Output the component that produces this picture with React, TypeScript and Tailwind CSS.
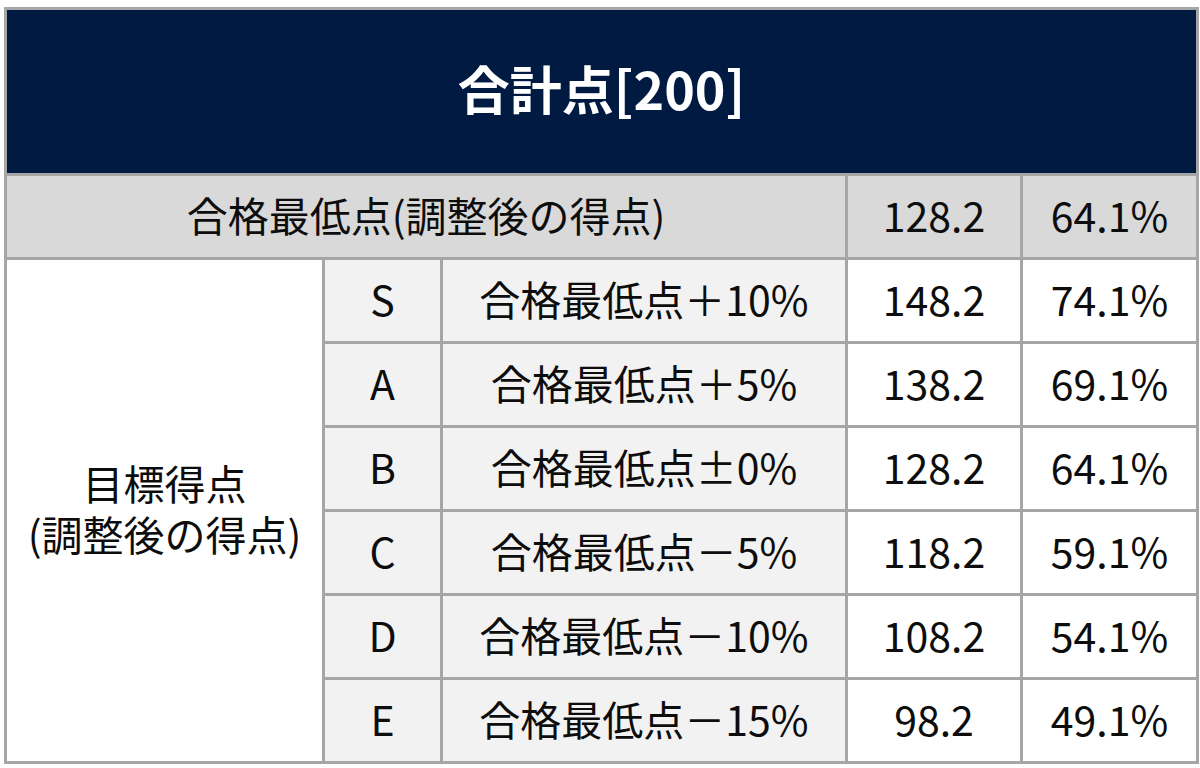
const rows = [
  { grade: 'S', label: '合格最低点＋10%', score: '148.2', rate: '74.1%' },
  { grade: 'A', label: '合格最低点＋5%', score: '138.2', rate: '69.1%' },
  { grade: 'B', label: '合格最低点±0%', score: '128.2', rate: '64.1%' },
  { grade: 'C', label: '合格最低点－5%', score: '118.2', rate: '59.1%' },
  { grade: 'D', label: '合格最低点－10%', score: '108.2', rate: '54.1%' },
  { grade: 'E', label: '合格最低点－15%', score: '98.2', rate: '49.1%' },
]

const cell = 'flex items-center justify-center text-[41px] text-[#0d0d0d] pb-[5px]'

export default function App() {
  return (
    <div
      className="w-[1200px] h-[768px] bg-white pt-[7px] pl-[4px]"
      style={{ fontFamily: '"Noto Sans CJK JP", "Noto Sans", sans-serif' }}
    >
      <div className="w-[1195px] h-[757px] bg-[#a6a6a6] p-[3px] grid gap-[3px] grid-cols-[315px_115px_402px_172px_173px] grid-rows-[163px_repeat(7,81px)]">
        <div className="col-span-5 bg-[#001a42] flex items-center justify-center text-white text-[52px] font-bold leading-none pb-[8px]">
          合計点[200]
        </div>

        <div className={`col-span-3 bg-[#d9d9d9] ${cell} leading-none`}>合格最低点(調整後の得点)</div>
        <div className={`bg-[#d9d9d9] ${cell} leading-none`}>128.2</div>
        <div className={`bg-[#d9d9d9] ${cell} leading-none`}>64.1%</div>

        <div className={`row-span-6 bg-white ${cell} flex-col`}>
          <span className="block h-[51px] leading-[51px]">目標得点</span>
          <span className="block h-[51px] leading-[51px]">(調整後の得点)</span>
        </div>

        {rows.map((r) => (
          <>
            <div key={r.grade + 'g'} className={`bg-[#f2f2f2] ${cell} leading-none`}>{r.grade}</div>
            <div key={r.grade + 'l'} className={`bg-[#f2f2f2] ${cell} leading-none`}>{r.label}</div>
            <div key={r.grade + 's'} className={`bg-white ${cell} leading-none`}>{r.score}</div>
            <div key={r.grade + 'r'} className={`bg-white ${cell} leading-none`}>{r.rate}</div>
          </>
        ))}
      </div>
    </div>
  )
}
